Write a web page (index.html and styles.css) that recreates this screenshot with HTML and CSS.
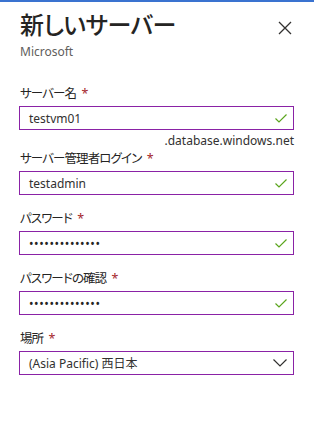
FILE: index.html
```html
<!DOCTYPE html>
<html lang="ja">

<head>
    <meta charset="UTF-8">
    <meta name="viewport" content="width=device-width, initial-scale=1.0">
    <title>新しいサーバー</title>
    <link rel="stylesheet" href="styles.css">
</head>

<body>
    <div class="blade">
        <header class="blade-header">
            <div>
                <h1 class="title">新しいサーバー</h1>
                <div class="subtitle">Microsoft</div>
            </div>
            <button class="close" aria-label="閉じる">
                <svg width="14" height="14" viewBox="0 0 14 14">
                    <path d="M1 1L13 13M13 1L1 13" stroke="#323130" stroke-width="1.3" fill="none" />
                </svg>
            </button>
        </header>

        <form class="form">
            <div class="field has-suffix">
                <label class="label">サーバー名 <span class="req">*</span></label>
                <div class="box">
                    <span class="value">testvm01</span>
                    <svg class="check" width="12" height="9" viewBox="0 0 12 9">
                        <path d="M0.5 4.5L4 8L11.5 0.5" stroke="#5ba51e" stroke-width="1.2" fill="none" />
                    </svg>
                </div>
                <div class="suffix">.database.windows.net</div>
            </div>

            <div class="field">
                <label class="label">サーバー管理者ログイン <span class="req">*</span></label>
                <div class="box">
                    <span class="value">testadmin</span>
                    <svg class="check" width="12" height="9" viewBox="0 0 12 9">
                        <path d="M0.5 4.5L4 8L11.5 0.5" stroke="#5ba51e" stroke-width="1.2" fill="none" />
                    </svg>
                </div>
            </div>

            <div class="field">
                <label class="label">パスワード <span class="req">*</span></label>
                <div class="box">
                    <span class="dots">••••••••••••••</span>
                    <svg class="check" width="12" height="9" viewBox="0 0 12 9">
                        <path d="M0.5 4.5L4 8L11.5 0.5" stroke="#5ba51e" stroke-width="1.2" fill="none" />
                    </svg>
                </div>
            </div>

            <div class="field">
                <label class="label">パスワードの確認 <span class="req">*</span></label>
                <div class="box">
                    <span class="dots">••••••••••••••</span>
                    <svg class="check" width="12" height="9" viewBox="0 0 12 9">
                        <path d="M0.5 4.5L4 8L11.5 0.5" stroke="#5ba51e" stroke-width="1.2" fill="none" />
                    </svg>
                </div>
            </div>

            <div class="field">
                <label class="label">場所 <span class="req">*</span></label>
                <div class="box">
                    <span class="value">(Asia Pacific) 西日本</span>
                    <svg class="chevron" width="14" height="8" viewBox="0 0 14 8">
                        <path d="M0.5 0.5L7 7L13.5 0.5" stroke="#323130" stroke-width="1.2" fill="none" />
                    </svg>
                </div>
            </div>
        </form>
    </div>
</body>

</html>
```

FILE: styles.css
```css
body {
    margin: 0;
    background-color: #fff;
    font-family: "Noto Sans", "Noto Sans CJK JP", sans-serif;
    font-feature-settings: "palt";
    color: #323130;
}

.blade {
    border-top: 2px solid #3a73d0;
    width: 314px;
    height: 426px;
}

.blade-header {
    display: flex;
    justify-content: space-between;
    align-items: flex-start;
    padding: 8px 22px 0 20px;
}

.title {
    margin: 0;
    font-size: 24px;
    font-weight: 500;
    line-height: 30px;
    letter-spacing: -0.5px;
    color: #252423;
}

.subtitle {
    margin-top: 4px;
    font-size: 12px;
    line-height: 16px;
    color: #605e5c;
}

.close {
    margin-top: 11px;
    padding: 0;
    border: none;
    background: none;
    display: flex;
}

.form {
    padding: 0 20px 0 19px;
    margin-top: 26px;
}

.field {
    margin-bottom: 16px;
}

.field.has-suffix {
    margin-bottom: 2px;
}

.label {
    display: block;
    font-size: 12.5px;
    line-height: 16px;
    letter-spacing: -0.9px;
    margin-bottom: 4px;
    padding-left: 1px;
    color: #252423;
}

.req {
    color: #a4262c;
    margin-left: 3px;
}

.box {
    display: flex;
    align-items: center;
    justify-content: space-between;
    height: 24px;
    box-sizing: border-box;
    border: 1px solid #8a22a6;
    padding: 0 6px 0 9px;
}

.value {
    font-size: 12px;
}

.dots {
    font-size: 12px;
    letter-spacing: 0.6px;
    color: #252423;
}

.suffix {
    text-align: right;
    font-size: 12px;
    line-height: 16px;
    margin-top: 3px;
}
```
